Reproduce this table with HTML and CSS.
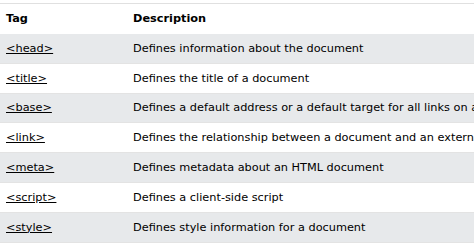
FILE: index.html
```html
<!DOCTYPE html>
<html lang="en">
<head>
  <meta charset="UTF-8" />
  <title>HTML Head Elements</title>
  <link rel="stylesheet" href="styles.css">
</head>
<body>

  <!-- Head elements reference table -->
  <table class="ref-table">
    <tr>
      <th class="col-tag">Tag</th>
      <th>Description</th>
    </tr>
    <tr>
      <td><a href="#">&lt;head&gt;</a></td>
      <td>Defines information about the document</td>
    </tr>
    <tr>
      <td><a href="#">&lt;title&gt;</a></td>
      <td>Defines the title of a document</td>
    </tr>
    <tr>
      <td><a href="#">&lt;base&gt;</a></td>
      <td>Defines a default address or a default target for all links on a page</td>
    </tr>
    <tr>
      <td><a href="#">&lt;link&gt;</a></td>
      <td>Defines the relationship between a document and an external resource</td>
    </tr>
    <tr>
      <td><a href="#">&lt;meta&gt;</a></td>
      <td>Defines metadata about an HTML document</td>
    </tr>
    <tr>
      <td><a href="#">&lt;script&gt;</a></td>
      <td>Defines a client-side script</td>
    </tr>
    <tr>
      <td><a href="#">&lt;style&gt;</a></td>
      <td>Defines style information for a document</td>
    </tr>
  </table>

</body>
</html>
```

FILE: styles.css
```css
* { box-sizing: border-box; }

body {
  margin: 0;
  padding-top: 3px;
  background: #fff;
  font-family: 'DejaVu Sans', Verdana, sans-serif;
  font-size: 11.3px;
  color: #000;
  overflow: hidden;
}

.ref-table {
  border-collapse: collapse;
  border-top: 1px solid #e0e0e0;
  width: 640px;
  white-space: nowrap;
}

.ref-table th,
.ref-table td {
  height: 29.8px;
  padding: 0 6px;
  text-align: left;
  vertical-align: middle;
  border-bottom: 1px solid #e3e3e3;
}

.ref-table th {
  height: 30px;
  font-weight: bold;
  border-bottom: none;
}

.col-tag {
  width: 127px;
}

.ref-table tr:nth-child(even) {
  background: #e7e9eb;
}

.ref-table a {
  color: #000;
  text-decoration: underline;
}
```
